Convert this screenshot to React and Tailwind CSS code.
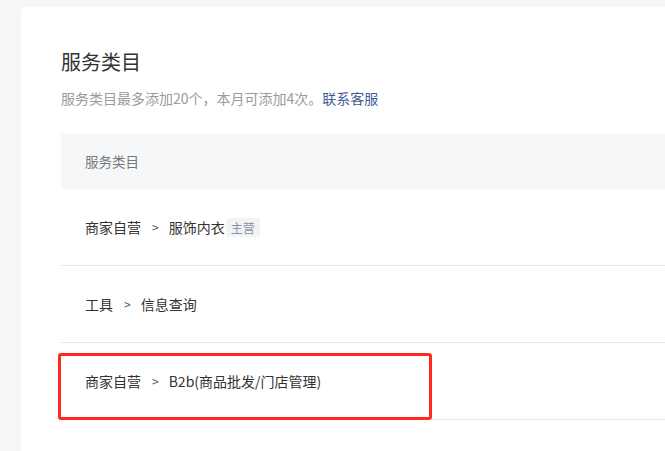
export default function App() {
  const font = { fontFamily: '"Noto Sans CJK SC", "Noto Sans", sans-serif' };
  return (
    <div className="min-h-[451px] w-[665px] overflow-hidden bg-[#f5f6f8] pl-[21px] pt-[7px]" style={font}>
      <div className="min-h-[444px] rounded-tl-[4px] bg-white pl-[40px] pt-[41px]">
        <h1 className="text-[20px] leading-[28px] font-normal text-[#333]">服务类目</h1>
        <p className="mt-[12px] text-[14px] leading-[20px] text-[#9a9a9a]">
          服务类目最多添加20个，本月可添加4次。<span className="text-[#3f5a95]">联系客服</span>
        </p>
        <div className="mt-[26px]">
          <div className="flex h-[55px] items-center bg-[#f6f7f9] pl-[24px] text-[13.5px] text-[#777]">服务类目</div>
          <Row a="商家自营" b="服饰内衣" tag="主营" />
          <Row a="工具" b="信息查询" />
          <Row a="商家自营" b="B2b(商品批发/门店管理)" boxed />
        </div>
      </div>
    </div>
  );
}

function Row({ a, b, tag, boxed }) {
  return (
    <div className="relative flex h-[77px] items-center border-b border-[#e6e6e6] pl-[24px] text-[14px] text-[#333]">
      <span>{a}</span>
      <span className="ml-[11px] mr-[10px] text-[12px] text-[#555]">&gt;</span>
      <span>{b}</span>
      {tag && (
        <span className="ml-[1px] rounded-[2px] bg-[#f2f3f5] px-[5px] text-[12px] leading-[19px] text-[#8a94a6]">{tag}</span>
      )}
      {boxed && (
        <div className="absolute left-[-3px] top-[10px] h-[67px] w-[374px] rounded-[3px] border-[3px] border-[#ff2a1f]" />
      )}
    </div>
  );
}
